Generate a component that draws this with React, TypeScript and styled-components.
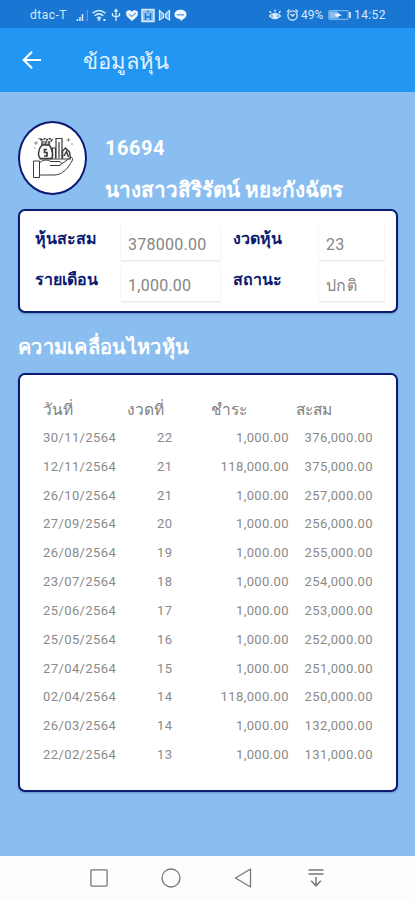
import React from "react";
import styled, { createGlobalStyle } from "styled-components";

const navy = "#0b1a72";

const GlobalStyle = createGlobalStyle`
  * { box-sizing: border-box; }
  body { margin: 0; font-family: Roboto, sans-serif; }
`;

const Screen = styled.div`
  width: 415px;
  height: 900px;
  display: flex;
  flex-direction: column;
  overflow: hidden;
  background: #8bbef0;
`;

const StatusBar = styled.div`
  height: 28px;
  flex: none;
  display: flex;
  align-items: center;
  justify-content: space-between;
  padding: 1px 27px 0 30px;
  background: #1976d2;
  color: #d6eafa;
  font-size: 12px;
  white-space: nowrap;
`;

const StatusGroup = styled.div`
  display: flex;
  align-items: center;
`;

const StatusText = styled.span<{ $spacing?: number; $width?: number }>`
  letter-spacing: ${(p) => p.$spacing ?? 0}px;
  width: ${(p) => (p.$width ? `${p.$width}px` : "auto")};
`;

const AppBar = styled.header`
  height: 64px;
  flex: none;
  display: flex;
  align-items: center;
  padding: 0 22px;
  background: #2196f3;
  color: #e4f3fe;
`;

const Title = styled.h1`
  margin: 3px 0 0 41px;
  font-size: 22px;
  line-height: 30px;
  font-weight: 500;
  white-space: nowrap;
`;

const Content = styled.main`
  flex: 1;
  padding: 29px 17px 0 18px;
`;

const Profile = styled.section`
  height: 88px;
  display: flex;
  gap: 18px;
`;

const Avatar = styled.div`
  width: 69px;
  height: 74px;
  flex: none;
  display: flex;
  align-items: center;
  justify-content: center;
  border: 2px solid ${navy};
  border-radius: 50%;
  background: #fff;
`;

const Member = styled.div`
  padding-top: 14px;
  color: #fff;
  font-weight: 700;
  white-space: nowrap;
`;

const MemberNumber = styled.div`
  font-size: 20px;
  line-height: 26px;
  letter-spacing: 0.5px;
`;

const MemberName = styled.div`
  margin-top: 15px;
  font-size: 20.7px;
  line-height: 28px;
`;

const Card = styled.section<{ $height: number }>`
  height: ${(p) => p.$height}px;
  border: 2px solid ${navy};
  border-radius: 7px;
  background: #fff;
  box-shadow: 0 1px 2px rgba(20, 50, 100, 0.3);
`;

const Summary = styled.div`
  display: grid;
  grid-template-columns: 86px 112px 86px 66px;
  grid-template-rows: 36px 36px;
  row-gap: 5px;
  padding: 14px 0 0 15px;
`;

const Label = styled.div`
  color: ${navy};
  font-size: 16px;
  line-height: 28px;
  font-weight: 700;
  white-space: nowrap;
`;

const Field = styled.div<{ $width: number }>`
  width: ${(p) => p.$width}px;
  height: 35px;
  padding-left: 7px;
  color: #858585;
  font-size: 16px;
  line-height: 39px;
  letter-spacing: 0.25px;
  background: #fff;
  box-shadow: 0 1px 2px rgba(0, 0, 0, 0.13);
`;

const Heading = styled.h2`
  height: 60px;
  margin: 0;
  padding-top: 18px;
  color: #fff;
  font-size: 20px;
  line-height: 32px;
  letter-spacing: 0.3px;
  font-weight: 700;
  white-space: nowrap;
`;

const Table = styled.div`
  padding: 21px 0 0 23px;
`;

const TableRow = styled.div`
  height: 28.84px;
  display: grid;
  grid-template-columns: 84px 84px 78px 84px;
  align-items: center;
  color: #8a8a8a;
  font-size: 13px;
  letter-spacing: 0.4px;
`;

const HeaderRow = styled(TableRow)`
  height: 27px;
  grid-template-columns: 84px 84px 85px 78px;
  color: #808080;
  font-size: 15.5px;
  letter-spacing: 0;
  white-space: nowrap;
`;

const Cell = styled.span<{ $align?: string; $indent?: number }>`
  text-align: ${(p) => p.$align ?? "left"};
  padding-left: ${(p) => p.$indent ?? 0}px;
`;

const NavBar = styled.nav`
  height: 44px;
  flex: none;
  display: flex;
  align-items: center;
  padding-left: 90px;
  background: #fdfdfd;
`;

const rows = [
  ["30/11/2564", "22", "1,000.00", "376,000.00"],
  ["12/11/2564", "21", "118,000.00", "375,000.00"],
  ["26/10/2564", "21", "1,000.00", "257,000.00"],
  ["27/09/2564", "20", "1,000.00", "256,000.00"],
  ["26/08/2564", "19", "1,000.00", "255,000.00"],
  ["23/07/2564", "18", "1,000.00", "254,000.00"],
  ["25/06/2564", "17", "1,000.00", "253,000.00"],
  ["25/05/2564", "16", "1,000.00", "252,000.00"],
  ["27/04/2564", "15", "1,000.00", "251,000.00"],
  ["02/04/2564", "14", "118,000.00", "250,000.00"],
  ["26/03/2564", "14", "1,000.00", "132,000.00"],
  ["22/02/2564", "13", "1,000.00", "131,000.00"],
];

const ConnectionIcons = () => (
  <svg width="112" height="16" viewBox="76 6 112 16" fill="none" stroke="#d6eafa">
    <path d="M77.5 20v-2M80 20v-4M82.5 20v-7" strokeWidth="1.6" />
    <path d="M87.3 20V9" strokeWidth="1.2" opacity="0.35" />
    <path d="M92.5 12.3Q99 6.8 105.5 12.3M94.7 14.8Q99 11 103.3 14.8M97 17.2Q99 15.5 101 17.2" strokeWidth="1.5" />
    <circle cx="99" cy="18.5" r="0.9" fill="#d6eafa" />
    <path d="M103.5 19h2" strokeWidth="2" />
    <path d="M116 20V9M112.5 12v2.5l3.5 1.5 3.5-1.5V12M114.5 10.5l1.5-2 1.5 2" strokeWidth="1.3" />
    <path d="M132 20c-4-3.2-6-5-6-7.5 0-3.4 4-4.3 6-1.7 2-2.6 6-1.7 6 1.7 0 2.5-2 4.3-6 7.5z" fill="#f1f9ff" stroke="none" />
    <path d="M129 13l2.5 2.5L136 12" stroke="#5fa4e4" strokeWidth="1.2" />
    <rect x="142" y="8.5" width="12" height="12" fill="#8fc0ef" strokeWidth="1.5" />
    <path d="M145.5 19v-7M150.5 19v-7M145.5 16h5" stroke="#1976d2" strokeWidth="1.5" />
    <path d="M148 12V9" stroke="#1976d2" />
    <path d="M159.5 19V9.5l4 3.5v3.5zM169.5 19V9.5l-4 3.5v3.5z" fill="#6faee8" strokeWidth="1.2" />
    <path d="M180.5 8.8c3.7 0 6 2 6 4.8 0 3-3.5 4.7-6 6.6v-2c-3.5-.1-6-1.8-6-4.6 0-2.8 2.3-4.8 6-4.8z" fill="#f1f9ff" stroke="none" />
    <path d="M177 13.8h7" stroke="#68a8e6" strokeWidth="1.5" />
  </svg>
);

const EyeAndAlarm = () => (
  <svg width="32" height="16" viewBox="269 6 32 16" fill="none" stroke="#d6eafa" strokeWidth="1.3">
    <path d="M269.5 15q5.5-5 11 0-5.5 5-11 0zM271 12l-1.5-2M275 11V8.5M279 12l1.5-2" />
    <circle cx="275" cy="15" r="2" fill="#d6eafa" />
    <circle cx="292.5" cy="14.5" r="4.6" />
    <path d="M287 11l2.5-2.5M295.5 8.5L298 11M290.5 13l2.2 2 1.8-2" />
  </svg>
);

const Battery = () => (
  <svg width="26" height="12" viewBox="0 0 26 12" fill="none">
    <rect x="0.7" y="1.7" width="19.5" height="8.6" rx="1.5" stroke="#78b5ed" strokeWidth="1.2" />
    <path d="M1.5 2.5h8v7h-8z" fill="#8abff0" />
    <path d="M14 6.5L9 3.5v2H6l4.5 3.5V7z" fill="#f3faff" />
    <path d="M22 3v6" stroke="#d6eafa" strokeWidth="1.8" />
  </svg>
);

const BackArrow = () => (
  <svg width="20" height="20" viewBox="0 0 20 20" fill="none" stroke="#fff" strokeWidth="2.2">
    <path d="M19 10H2.5M10 1.8L1.8 10l8.2 8.2" />
  </svg>
);

const SavingsHand = () => (
  <svg width="42" height="42" viewBox="31 137 42 42" fill="none" stroke="#3a3a3a" strokeWidth="1">
    <path d="M39.5 139l2.5 1 2-1.5 2 1.5 2-1.5 3 1-1.5 2.5h-8.5zM40 144h10" strokeWidth="1.4" strokeDasharray="2.5 0.8" />
    <path d="M41 145c-4 4-4.5 12-1.5 13.5h10.5c2.5-1 2-10-2-13.5z" strokeWidth="1.5" />
    <path d="M46 149.5h-2.5v3h2.5v3.5h-3" strokeWidth="1.7" />
    <path d="M51.5 158.5V148h3v10.5M55 158.5V138.5h6v20M58 142v16" strokeWidth="1.2" />
    <path d="M61.5 158.5V151l3-3 4 4 1 6.5M63 156l2.5-4.5 2 5.5" strokeWidth="1.5" />
    <path d="M38.5 159H70" />
    <path d="M32.5 161h6v16.5h-6zM39 162.5c4-3.5 8-2.5 11-1h8c3 0 3 4 0 4h-9M39 175h15c8-.5 13-7 17-14 2-4-1.5-4.5-3.5-2l-7 5" />
    <path d="M35 141v4M33 143h4M67.5 138v4M65.5 140h4M71 143v2M37.5 138v1.5M33 148h1.5" strokeWidth="0.8" stroke="#777" />
  </svg>
);

const NavIcon = styled.svg.attrs({ fill: "none", stroke: "#777", strokeWidth: 1.3 })<{ $gap?: number }>`
  flex: none;
  margin-right: ${(p) => p.$gap ?? 0}px;
`;

const NavIcons = () => (
  <>
    <NavIcon width="18" height="18" viewBox="0 0 18 18" $gap={53}>
      <rect x="0.9" y="0.9" width="16.2" height="16.2" rx="0.8" />
    </NavIcon>
    <NavIcon width="20" height="20" viewBox="0 0 20 20" $gap={53}>
      <circle cx="10" cy="10" r="9" />
    </NavIcon>
    <NavIcon width="18" height="20" viewBox="0 0 18 20" $gap={55}>
      <path d="M16.5 1v18L1.5 10z" strokeLinejoin="round" />
    </NavIcon>
    <NavIcon width="18" height="20" viewBox="0 0 18 20">
      <path d="M1.5 2h15M1.5 6h15M9 9v9M4.2 12.8L9 17.8l4.8-5" strokeWidth="1.5" />
    </NavIcon>
  </>
);

export default function App() {
  return (
    <>
      <GlobalStyle />
      <Screen>
        <StatusBar>
          <StatusGroup>
            <StatusText $spacing={0.5} $width={46}>dtac-T</StatusText>
            <ConnectionIcons />
          </StatusGroup>
          <StatusGroup>
            <EyeAndAlarm />
            <StatusText $width={27}>49%</StatusText>
            <Battery />
            <StatusText $spacing={0.4} $width={34}>14:52</StatusText>
          </StatusGroup>
        </StatusBar>
        <AppBar>
          <BackArrow />
          <Title>ข้อมูลหุ้น</Title>
        </AppBar>
        <Content>
          <Profile>
            <Avatar><SavingsHand /></Avatar>
            <Member>
              <MemberNumber>16694</MemberNumber>
              <MemberName>นางสาวสิริรัตน์ หยะกังฉัตร</MemberName>
            </Member>
          </Profile>
          <Card $height={104}>
            <Summary>
              <Label>หุ้นสะสม</Label>
              <Field $width={99}>378000.00</Field>
              <Label>งวดหุ้น</Label>
              <Field $width={65}>23</Field>
              <Label>รายเดือน</Label>
              <Field $width={99}>1,000.00</Field>
              <Label>สถานะ</Label>
              <Field $width={65}>ปกติ</Field>
            </Summary>
          </Card>
          <Heading>ความเคลื่อนไหวหุ้น</Heading>
          <Card $height={419}>
            <Table>
              <HeaderRow>
                <Cell>วันที่</Cell>
                <Cell>งวดที่</Cell>
                <Cell>ชำระ</Cell>
                <Cell>สะสม</Cell>
              </HeaderRow>
              {rows.map(([date, period, paid, total]) => (
                <TableRow key={date}>
                  <Cell>{date}</Cell>
                  <Cell $indent={30}>{period}</Cell>
                  <Cell $align="right">{paid}</Cell>
                  <Cell $align="right">{total}</Cell>
                </TableRow>
              ))}
            </Table>
          </Card>
        </Content>
        <NavBar><NavIcons /></NavBar>
      </Screen>
    </>
  );
}
